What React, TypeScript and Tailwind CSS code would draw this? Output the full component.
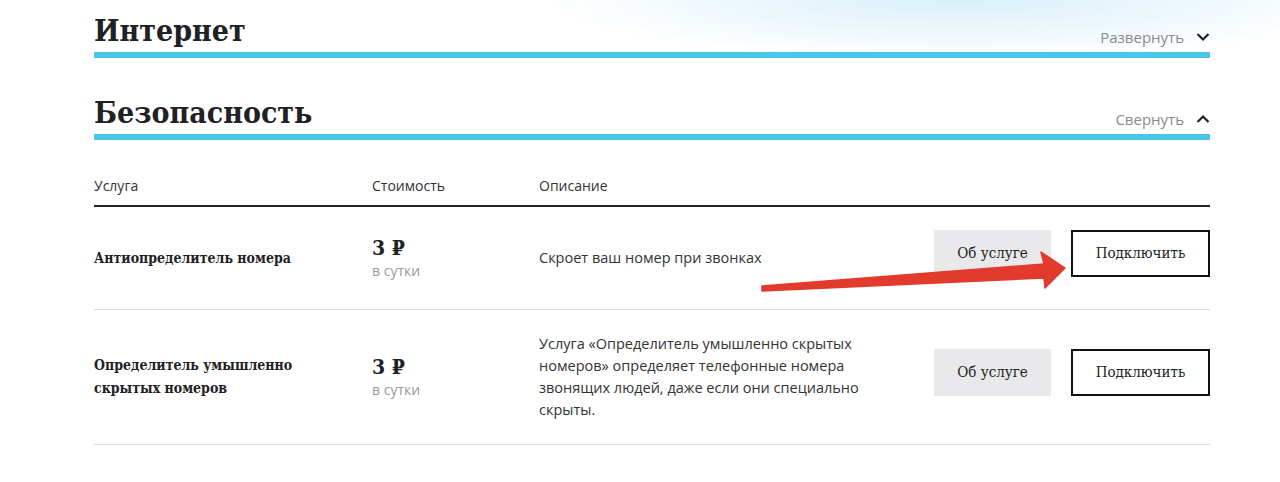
import React from "react";

const serif = "font-['DejaVu_Serif_Condensed','DejaVu_Serif',serif]";
const sans = "font-['Open_Sans','Noto_Sans',sans-serif]";

function Chevron({ up }: { up?: boolean }) {
  return (
    <svg width="14" height="10" viewBox="0 0 14 10" className="ml-[12px]">
      <path
        d={up ? "M1.5 8 L7 2.5 L12.5 8" : "M1.5 2 L7 7.5 L12.5 2"}
        fill="none"
        stroke="#222"
        strokeWidth="2.2"
      />
    </svg>
  );
}

function SectionHead({ title, action, up }: { title: string; action: string; up?: boolean }) {
  return (
    <div>
      <div className="flex items-end justify-between">
        <h2 className={`${serif} text-[30px] leading-[36px] font-bold text-[#1f2125]`}>{title}</h2>
        <div className={`${sans} flex items-center text-[15px] text-[#8a8a8a] pb-[1px]`}>
          {action}
          <Chevron up={up} />
        </div>
      </div>
      <div className="h-[6px] bg-[#4bc5ea] mt-[3px]" />
    </div>
  );
}

type Row = { name: string[]; desc: string[]; h: string };

const rows: Row[] = [
  { name: ["Антиопределитель номера"], desc: ["Скроет ваш номер при звонках"], h: "h-[103px]" },
  {
    name: ["Определитель умышленно", "скрытых номеров"],
    desc: [
      "Услуга «Определитель умышленно скрытых",
      "номеров» определяет телефонные номера",
      "звонящих людей, даже если они специально",
      "скрыты.",
    ],
    h: "h-[135px]",
  },
];

export default function App() {
  return (
    <div className="relative w-[1280px] h-[482px] overflow-hidden bg-white bg-[radial-gradient(ellipse_420px_60px_at_960px_0px,#d8eff9_0%,#eef8fc_55%,#ffffff_100%)]">
      <div className="ml-[94px] w-[1116px] pt-[13px]">
        <SectionHead title="Интернет" action="Развернуть" />
        <div className="mt-[37px]">
          <SectionHead title="Безопасность" action="Свернуть" up />
        </div>

        <div className={`${sans} mt-[35px] grid grid-cols-[278px_167px_1fr] text-[14px] text-[#333] pb-[9px] border-b-2 border-[#222]`}>
          <div>Услуга</div>
          <div>Стоимость</div>
          <div>Описание</div>
        </div>

        {rows.map((r, i) => (
          <div
            key={i}
            className={`grid grid-cols-[278px_167px_1fr_auto] items-center border-b border-[#dcdcdc] ${r.h}`}
          >
            <div className={`${serif} font-bold text-[14px] leading-[23px] text-[#1f2125]`}>
              {r.name.map((n) => (
                <div key={n}>{n}</div>
              ))}
            </div>
            <div className="flex flex-col">
              <div className={`${serif} font-bold text-[21px] leading-[26px] text-[#1f2125]`}>3 ₽</div>
              <div className={`${sans} text-[14px] leading-[20px] text-[#9a9a9a]`}>в сутки</div>
            </div>
            <div className={`${sans} text-[14.5px] leading-[22px] text-[#333]`}>
              {r.desc.map((d) => (
                <div key={d}>{d}</div>
              ))}
            </div>
            <div className="flex gap-[20px] pb-[9px]">
              <button className={`${serif} w-[117px] h-[47px] bg-[#e9e9ec] text-[15px] text-[#222]`}>
                Об услуге
              </button>
              <button
                className={`${serif} w-[139px] h-[47px] border-2 border-[#111] bg-white text-[15px] text-[#222]`}
              >
                Подключить
              </button>
            </div>
          </div>
        ))}
      </div>

      <svg className="absolute left-0 top-0 pointer-events-none" width="1280" height="482" viewBox="0 0 1280 482">
        <path
          d="M762 286 L1044 264 L1041 252 L1065 268 L1045 288 L1044 278 L762 291 Z"
          fill="#e23b2e"
          stroke="#e23b2e"
          strokeWidth="1.5"
          strokeLinejoin="round"
        />
      </svg>
    </div>
  );
}
